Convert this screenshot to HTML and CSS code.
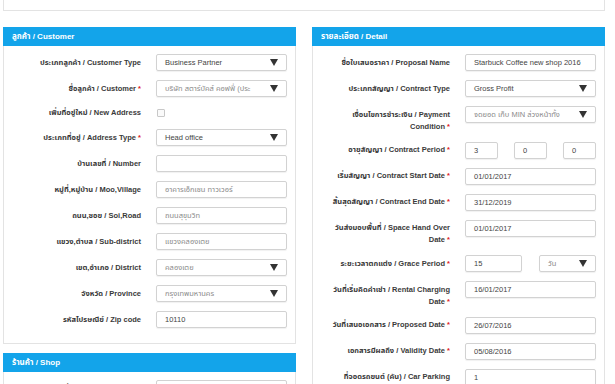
FILE: index.html
```html
<!DOCTYPE html>
<html lang="th">
<head>
    <meta charset="UTF-8">
    <title>Proposal</title>
    <link rel="stylesheet" href="styles.css">
</head>
<body>
<div class="page">
    <div class="top-box"></div>

    <div class="columns">
        <div class="col">
            <section class="panel">
                <div class="panel-head">ลูกค้า / Customer</div>
                <div class="form">
                    <label class="lbl">ประเภทลูกค้า / Customer Type</label>
                    <div class="input select">Business Partner</div>

                    <label class="lbl">ชื่อลูกค้า / Customer <span class="req">*</span></label>
                    <div class="input select muted">บริษัท สตาร์บัคส์ คอฟฟี่ (ประ</div>

                    <label class="lbl lbl-check">เพิ่มที่อยู่ใหม่ / New Address</label>
                    <div class="check-wrap"><span class="check"></span></div>

                    <label class="lbl">ประเภทที่อยู่ / Address Type <span class="req">*</span></label>
                    <div class="input select">Head office</div>

                    <label class="lbl">บ้านเลขที่ / Number</label>
                    <div class="input"></div>

                    <label class="lbl">หมู่ที่,หมู่บ้าน / Moo,Village</label>
                    <div class="input muted">อาคารเอ็กเชน ทาวเวอร์</div>

                    <label class="lbl">ถนน,ซอย / Soi,Road</label>
                    <div class="input muted">ถนนสุขุมวิท</div>

                    <label class="lbl">แขวง,ตำบล / Sub-district</label>
                    <div class="input muted">แขวงคลองเตย</div>

                    <label class="lbl">เขต,อำเภอ / District</label>
                    <div class="input select muted">คลองเตย</div>

                    <label class="lbl">จังหวัด / Province</label>
                    <div class="input select muted">กรุงเทพมหานคร</div>

                    <label class="lbl">รหัสไปรษณีย์ / Zip code</label>
                    <div class="input">10110</div>
                </div>
            </section>

            <section class="panel">
                <div class="panel-head">ร้านค้า / Shop</div>
                <div class="form">
                    <label class="lbl">ชื่อร้านค้า / Shop Name</label>
                    <div class="input"></div>
                </div>
            </section>
        </div>

        <div class="col">
            <section class="panel">
                <div class="panel-head">รายละเอียด / Detail</div>
                <div class="form">
                    <label class="lbl">ชื่อใบเสนอราคา / Proposal Name</label>
                    <div class="input">Starbuck Coffee new shop 2016</div>

                    <label class="lbl">ประเภทสัญญา / Contract Type</label>
                    <div class="input select">Gross Profit</div>

                    <label class="lbl">เงื่อนไขการชำระเงิน / Payment Condition <span class="req">*</span></label>
                    <div class="input select muted">จดยอด เก็บ MIN ล่วงหน้าทั้ง</div>

                    <label class="lbl">อายุสัญญา / Contract Period <span class="req">*</span></label>
                    <div class="split3">
                        <div class="input">3</div>
                        <div class="input">0</div>
                        <div class="input">0</div>
                    </div>

                    <label class="lbl">เริ่มสัญญา / Contract Start Date <span class="req">*</span></label>
                    <div class="input">01/01/2017</div>

                    <label class="lbl">สิ้นสุดสัญญา / Contract End Date <span class="req">*</span></label>
                    <div class="input">31/12/2019</div>

                    <label class="lbl">วันส่งมอบพื้นที่ / Space Hand Over Date <span class="req">*</span></label>
                    <div class="input">01/01/2017</div>

                    <label class="lbl">ระยะเวลาตกแต่ง / Grace Period <span class="req">*</span></label>
                    <div class="split2">
                        <div class="input">15</div>
                        <div class="input select muted">วัน</div>
                    </div>

                    <label class="lbl">วันที่เริ่มคิดค่าเช่า / Rental Charging Date <span class="req">*</span></label>
                    <div class="input">16/01/2017</div>

                    <label class="lbl">วันที่เสนอเอกสาร / Proposed Date <span class="req">*</span></label>
                    <div class="input">26/07/2016</div>

                    <label class="lbl">เอกสารมีผลถึง / Validity Date <span class="req">*</span></label>
                    <div class="input">05/08/2016</div>

                    <label class="lbl">ที่จอดรถยนต์ (คัน) / Car Parking</label>
                    <div class="input">1</div>
                </div>
            </section>
        </div>
    </div>
</div>
</body>
</html>
```

FILE: styles.css
```css
body {
    margin: 0;
    background: #fff;
    font-family: "Liberation Sans", "Noto Sans Thai", "Noto Sans", sans-serif;
    font-size: 7.5px;
    color: #333;
    overflow: hidden;
}
.page { width: 602px; padding-left: 3px; }

.top-box {
    height: 10px;
    border: 1px solid #e3e3e3; border-top: none;
    margin-bottom: 16px;
}

.columns { display: grid; grid-template-columns: 293px 293px; column-gap: 16px; align-items: start; }

.panel { border: 1px solid #e3e3e3; margin-bottom: 9px; }
.panel-head {
    margin: -1px -1px 0;
    height: 19px; line-height: 19px;
    padding-left: 9px;
    background: #13a4ea;
    color: #fff; font-weight: bold; font-size: 8px;
}

.form {
    display: grid;
    grid-template-columns: 1fr 131px;
    column-gap: 15px; row-gap: 9px;
    padding: 8px 8px 15px 13px;
}
.lbl {
    text-align: right; font-weight: bold; color: #3a3a3a;
    line-height: 12px; padding-top: 2.5px;
}
.lbl-check { padding-top: 1px; }
.req { color: #e02020; }

.input {
    position: relative;
    box-sizing: border-box; height: 17px;
    border: 1px solid #d2d2d2; border-radius: 2px;
    box-shadow: 0 1px 1px rgba(0,0,0,0.06);
    padding: 0 8px;
    line-height: 15px; color: #444;
    white-space: nowrap; overflow: hidden;
}
.muted { color: #8a8a8a; }
.select { padding-right: 22px; }
.select::after {
    content: ""; position: absolute; right: 8px; top: 4px;
    border-left: 4.5px solid transparent; border-right: 4.5px solid transparent;
    border-top: 7px solid #333;
}

.check-wrap { height: 14px; display: flex; align-items: center; padding-left: 1px; }
.check {
    width: 6px; height: 6px;
    border: 1px solid #c8c8c8; border-radius: 1px; background: #fafafa;
}

.split3 { display: grid; grid-template-columns: 1fr 1fr 1fr; column-gap: 16px; }
.split2 { display: grid; grid-template-columns: 1fr 1fr; column-gap: 17px; }
```
